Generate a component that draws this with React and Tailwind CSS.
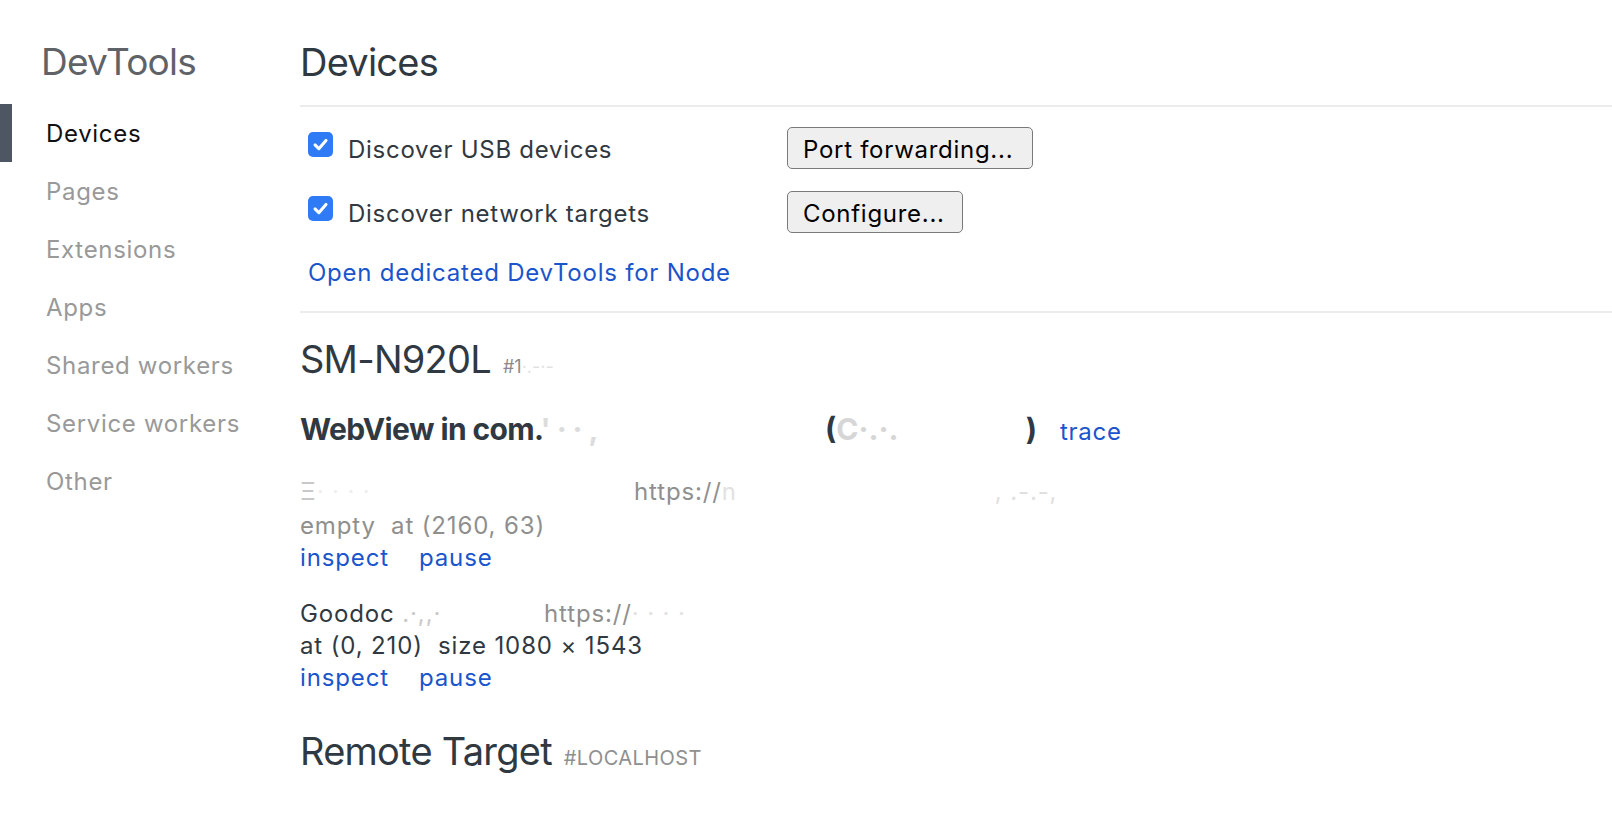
import React from "react";

function Check() {
  return (
    <span className="mt-[5px] flex h-[25px] w-[25px] shrink-0 items-center justify-center rounded-[5px] bg-[#2f7bf5]">
      <svg width="19" height="19" viewBox="0 0 16 16" fill="none">
        <path d="M3.4 8.4 L6.6 11.5 L12.6 4.6" stroke="white" strokeWidth="2.6" strokeLinecap="round" strokeLinejoin="round" />
      </svg>
    </span>
  );
}

function Btn({ children, w }) {
  return (
    <button className={`h-[42px] ${w} rounded-[5px] border border-[#7a7a7a] bg-[#efefef] pl-[15px] pt-[3px] text-left text-[24px] leading-[32px] tracking-[0.03em] text-black`}>
      {children}
    </button>
  );
}

const navItems = ["Devices", "Pages", "Extensions", "Apps", "Shared workers", "Service workers", "Other"];

export default function App() {
  return (
    <div className="flex min-h-[836px] w-full bg-white font-['Inter',sans-serif] text-[#303942]">
      {/* Sidebar */}
      <div className="w-[300px] shrink-0 pt-[40px]">
        <div className="pl-[41px] text-[37px] leading-[44px] tracking-[-0.02em] text-[#5f6368]">DevTools</div>
        <div className="mt-[20px] flex flex-col text-[24px] tracking-[0.028em]">
          {navItems.map((n, i) =>
            i === 0 ? (
              <div key={n} className="h-[58px] border-l-[12px] border-[#4f5663] pl-[34px] leading-[59px] text-[#111111]">
                {n}
              </div>
            ) : (
              <div key={n} className="h-[58px] pl-[46px] leading-[59px] text-[#999999]">
                {n}
              </div>
            )
          )}
        </div>
      </div>

      {/* Main */}
      <div className="flex-1 pt-[39px]">
        <h1 className="text-[38px] leading-[46px] tracking-[-0.02em] text-[#303942]">Devices</h1>
        <div className="mt-[20px] h-[2px] bg-[#ececec]" />

        <div className="mt-[20px] flex flex-col gap-[22px] pl-[8px] text-[24px] tracking-[0.03em]">
          <div className="flex items-start">
            <div className="flex w-[479px] items-start">
              <Check />
              <span className="ml-[15px] mt-[7px] leading-[32px]">Discover USB devices</span>
            </div>
            <Btn w="w-[246px]">Port forwarding...</Btn>
          </div>
          <div className="flex items-start">
            <div className="flex w-[479px] items-start">
              <Check />
              <span className="ml-[15px] mt-[7px] leading-[32px]">Discover network targets</span>
            </div>
            <Btn w="w-[176px]">Configure...</Btn>
          </div>
        </div>

        <div className="mt-[24px] pl-[8px] text-[24px] leading-[32px] tracking-[0.032em] text-[#1a55cc]">Open dedicated DevTools for Node</div>
        <div className="mt-[22px] h-[2px] bg-[#ececec]" />

        {/* Device */}
        <div className="mt-[23px] flex items-baseline">
          <span className="text-[38px] leading-[46px] tracking-[-0.02em]">SM-N920L</span>
          <span className="ml-[12px] text-[18px] text-[#8a8a8a]">#1<span className="text-[#e2e2e2]">·.-·-</span></span>
        </div>

        <div className="mt-[27px] flex items-baseline whitespace-nowrap text-[30px] leading-[40px]">
          <span className="inline-block w-[525px] font-bold tracking-[-0.02em]">
            WebView in com.<span className="text-[#dcdcdc]">' ·  ·  ,</span>
          </span>
          <span className="flex w-[212px] items-baseline justify-between font-bold">
            <span>
              (<span className="text-[#d6d6d6]">C·.·.</span>
            </span>
            <span>)</span>
          </span>
          <span className="ml-[23px] text-[24px] tracking-[0.03em] text-[#1a55cc]">trace</span>
        </div>

        <div className="mt-[24px] text-[24px] leading-[32px] tracking-[0.036em]">
          <div className="mb-[2px] flex whitespace-nowrap">
            <span className="inline-block w-[334px] text-[#c8c8c8]">Ξ<span className="text-[#eeeeee]">· · · ·</span></span>
            <span className="text-[#8f8f8f]">https://<span className="text-[#e2e2e2]">n</span></span>
            <span className="ml-[258px] text-[#e0e0e0]">, .-.-,</span>
          </div>
          <div className="text-[#8f8f8f]">empty&nbsp;&nbsp;at (2160, 63)</div>
          <div className="flex text-[#1a55cc]">
            <span>inspect</span>
            <span className="ml-[30px]">pause</span>
          </div>
        </div>

        <div className="mt-[24px] text-[24px] leading-[32px] tracking-[0.036em]">
          <div className="flex whitespace-nowrap">
            <span className="inline-block w-[244px]">Goodoc <span className="text-[#c8c8c8]">.·,,·</span></span>
            <span className="text-[#8f8f8f]">https://<span className="text-[#e2e2e2]">· · · ·</span></span>
          </div>
          <div>at (0, 210)&nbsp;&nbsp;size 1080 × 1543</div>
          <div className="flex text-[#1a55cc]">
            <span>inspect</span>
            <span className="ml-[30px]">pause</span>
          </div>
        </div>

        <div className="mt-[34px] flex items-baseline">
          <span className="text-[38px] leading-[46px] tracking-[-0.02em]">Remote Target</span>
          <span className="ml-[12px] text-[20px] tracking-[0.02em] text-[#8f8f8f]">#LOCALHOST</span>
        </div>
      </div>
    </div>
  );
}
